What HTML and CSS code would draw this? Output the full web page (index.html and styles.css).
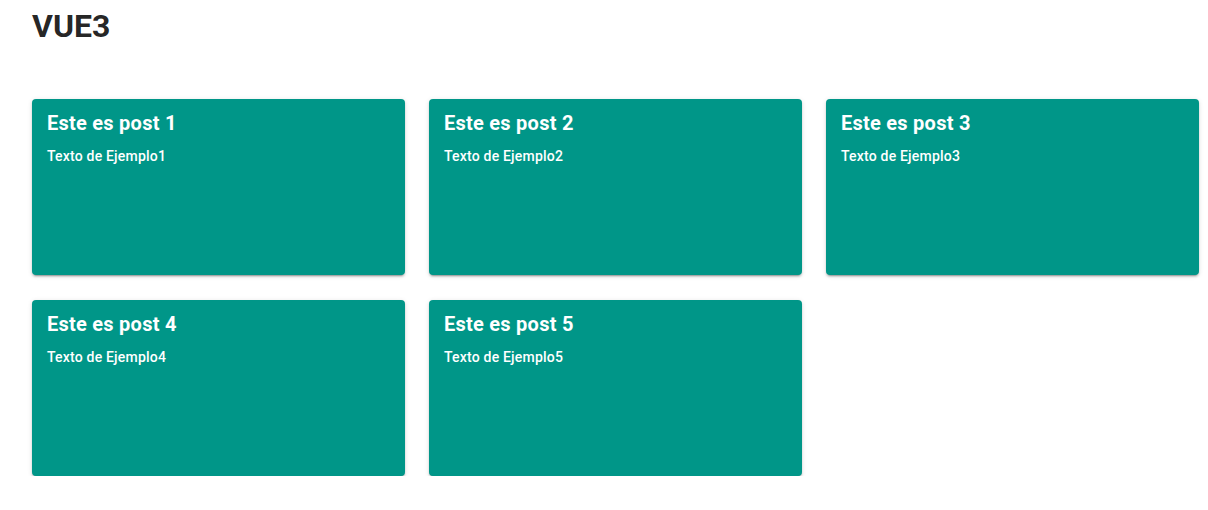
FILE: index.html
```html
<!DOCTYPE html>
<html lang="es">
<head>
<meta charset="utf-8">
<title>VUE3</title>
<link rel="stylesheet" href="styles.css">
</head>
<body>
<div class="page">
  <h1 class="page-title">VUE3</h1>
  <div class="grid">
    <div class="card"><div class="card-title">Este es post 1</div><div class="card-text">Texto de Ejemplo1</div></div>
    <div class="card"><div class="card-title">Este es post 2</div><div class="card-text">Texto de Ejemplo2</div></div>
    <div class="card"><div class="card-title">Este es post 3</div><div class="card-text">Texto de Ejemplo3</div></div>
    <div class="card"><div class="card-title">Este es post 4</div><div class="card-text">Texto de Ejemplo4</div></div>
    <div class="card"><div class="card-title">Este es post 5</div><div class="card-text">Texto de Ejemplo5</div></div>
  </div>
</div>
</body>
</html>
```

FILE: styles.css
```css
html, body {
  margin: 0;
  padding: 0;
  background: #fff;
}
body {
  font-family: Roboto, "Liberation Sans", sans-serif;
  color: rgba(0, 0, 0, 0.87);
}
.page {
  padding: 6px 32px 0;
}
.page-title {
  margin: 0 0 53px;
  font-size: 32px;
  line-height: 40px;
  font-weight: 700;
}
.grid {
  display: grid;
  grid-template-columns: repeat(3, 373px);
  column-gap: 24px;
  row-gap: 25px;
}
.card {
  height: 176px;
  box-sizing: border-box;
  background: #009688;
  color: #fff;
  border-radius: 4px;
  padding: 12px 16px 12px 15px;
  box-shadow: 0 3px 1px -2px rgba(0,0,0,.2), 0 2px 2px 0 rgba(0,0,0,.14), 0 1px 5px 0 rgba(0,0,0,.12);
}
.card-title {
  font-size: 20px;
  line-height: 24px;
  font-weight: 700;
  letter-spacing: 0.25px;
}
.card-text {
  margin-top: 11px;
  font-size: 14px;
  line-height: 20px;
  font-weight: 500;
  letter-spacing: 0.2px;
}
```
